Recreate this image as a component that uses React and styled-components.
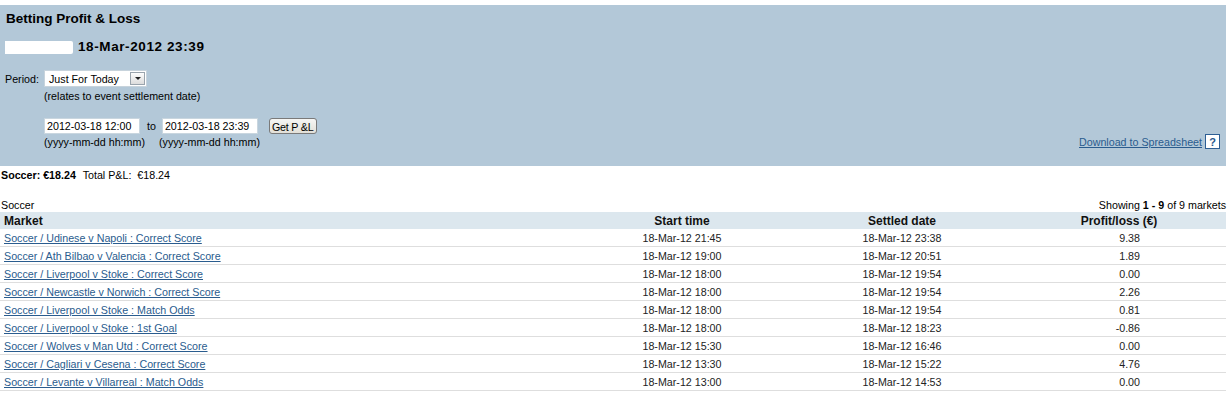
import styled, { createGlobalStyle } from "styled-components"

const Global = createGlobalStyle`
  body {
    margin: 0;
    background: #ffffff;
    font-family: "Liberation Sans", Arial, sans-serif;
    font-size: 10.7px;
    color: #000;
  }
`

const Page = styled.div`
  width: 1228px;
  padding-top: 5px;
`

const Panel = styled.section`
  width: 1226px;
  height: 161px;
  box-sizing: border-box;
  background: #b3c8d8;
  display: flex;
  justify-content: space-between;
  align-items: flex-end;
  padding: 6px 6px 17px 5px;
`

const Left = styled.div`
  display: flex;
  flex-direction: column;
  align-self: stretch;
`

const Title = styled.h1`
  margin: 0 0 0 1px;
  font-size: 13.5px;
  line-height: 15px;
  font-weight: bold;
`

const DateLine = styled.div`
  margin-top: 13px;
  display: flex;
  align-items: center;
  gap: 5px;
  font-size: 13.5px;
  font-weight: bold;
  letter-spacing: 0.6px;
  line-height: 16px;
`

const Blank = styled.span`
  display: inline-block;
  width: 68px;
  height: 13px;
  background: #ffffff;
  border-radius: 0 2px 2px 0;
`

const FieldRow = styled.div`
  display: flex;
  align-items: center;
  margin-top: ${p => p.$top || 0}px;
  padding-left: ${p => p.$indent || 0}px;
  line-height: 16px;
`

const Label = styled.span`
  width: 39px;
`

const Select = styled.div`
  display: flex;
  align-items: center;
  justify-content: space-between;
  width: 103px;
  height: 17px;
  box-sizing: border-box;
  background: #fff;
  border: 1px solid #c7d3dc;
  padding: 0 1px 0 4px;
`

const Arrow = styled.span`
  width: 15px;
  height: 13px;
  box-sizing: border-box;
  border: 1px solid #9aa4ad;
  background: linear-gradient(#fdfdfd, #dcdcdc);
  display: flex;
  align-items: center;
  justify-content: center;
  &::after {
    content: "";
    border-left: 3px solid transparent;
    border-right: 3px solid transparent;
    border-top: 3px solid #222;
  }
`

const Note = styled.div`
  padding-left: 39px;
  line-height: 16px;
  margin-top: 1px;
`

const DateInput = styled.input`
  width: 96px;
  height: 16px;
  box-sizing: border-box;
  border: 1px solid #c9d6df;
  padding: 0 2px;
  font: inherit;
  color: #000;
  background: #fff;
`

const To = styled.span`
  margin: 0 6px 0 7px;
`

const Button = styled.button`
  margin-left: 11px;
  height: 16px;
  box-sizing: border-box;
  padding: 0 2px;
  font: inherit;
  letter-spacing: -0.2px;
  background: linear-gradient(#f6f6f4, #e2e0d8);
  border: 1px solid #7a7a7a;
  border-radius: 3px;
  color: #000;
`

const Hint = styled.span`
  width: ${p => p.$w}px;
`

const Download = styled.div`
  display: flex;
  align-items: center;
  gap: 3px;
`

const Link = styled.a`
  color: #2a5c8e;
  text-decoration: underline;
  cursor: pointer;
`

const Help = styled.span`
  width: 15px;
  height: 15px;
  box-sizing: border-box;
  border: 1px solid #2d5f94;
  background: #fff;
  color: #27578d;
  font-weight: bold;
  font-size: 11px;
  display: flex;
  align-items: center;
  justify-content: center;
`

const Summary = styled.div`
  line-height: 16px;
  margin: 1px 0 0 1px;
  b { margin-right: 4px; }
`

const Caption = styled.div`
  display: flex;
  justify-content: space-between;
  width: 1226px;
  margin-top: 14px;
  padding-left: 1px;
  box-sizing: border-box;
  line-height: 16px;
`

const Table = styled.table`
  width: 1226px;
  border-collapse: collapse;
  table-layout: fixed;
  margin-top: -1px;
`

const Th = styled.th`
  background: #dce7ee;
  height: 17px;
  padding: 0 4px;
  font-size: 12px;
  font-weight: bold;
  text-align: ${p => p.$align || "center"};
  color: #111;
`

const Td = styled.td`
  height: 17px;
  padding: 0 ${p => p.$pr || 4}px 0 4px;
  border-bottom: 1px solid #dedede;
  text-align: ${p => p.$align || "center"};
  color: #222;
`

const rows = [
  ["Soccer / Udinese v Napoli : Correct Score", "18-Mar-12 21:45", "18-Mar-12 23:38", "9.38"],
  ["Soccer / Ath Bilbao v Valencia : Correct Score", "18-Mar-12 19:00", "18-Mar-12 20:51", "1.89"],
  ["Soccer / Liverpool v Stoke : Correct Score", "18-Mar-12 18:00", "18-Mar-12 19:54", "0.00"],
  ["Soccer / Newcastle v Norwich : Correct Score", "18-Mar-12 18:00", "18-Mar-12 19:54", "2.26"],
  ["Soccer / Liverpool v Stoke : Match Odds", "18-Mar-12 18:00", "18-Mar-12 19:54", "0.81"],
  ["Soccer / Liverpool v Stoke : 1st Goal", "18-Mar-12 18:00", "18-Mar-12 18:23", "-0.86"],
  ["Soccer / Wolves v Man Utd : Correct Score", "18-Mar-12 15:30", "18-Mar-12 16:46", "0.00"],
  ["Soccer / Cagliari v Cesena : Correct Score", "18-Mar-12 13:30", "18-Mar-12 15:22", "4.76"],
  ["Soccer / Levante v Villarreal : Match Odds", "18-Mar-12 13:00", "18-Mar-12 14:53", "0.00"],
]

export default function App() {
  return (
    <Page>
      <Global />
      <Panel>
        <Left>
          <Title>Betting Profit &amp; Loss</Title>
          <DateLine>
            <Blank />
            18-Mar-2012 23:39
          </DateLine>
          <FieldRow $top={15}>
            <Label>Period:</Label>
            <Select>
              Just For Today
              <Arrow />
            </Select>
          </FieldRow>
          <Note>(relates to event settlement date)</Note>
          <FieldRow $top={14} $indent={39}>
            <DateInput readOnly value="2012-03-18 12:00" />
            <To>to</To>
            <DateInput readOnly value="2012-03-18 23:39" />
            <Button>Get P &amp;L</Button>
          </FieldRow>
          <FieldRow $indent={39}>
            <Hint $w={115}>(yyyy-mm-dd hh:mm)</Hint>
            <Hint $w={120}>(yyyy-mm-dd hh:mm)</Hint>
          </FieldRow>
        </Left>
        <Download>
          <Link>Download to Spreadsheet</Link>
          <Help>?</Help>
        </Download>
      </Panel>

      <Summary>
        <b>Soccer: €18.24</b> Total P&amp;L:&nbsp; €18.24
      </Summary>

      <Caption>
        <span>Soccer</span>
        <span>Showing <b>1 - 9</b> of 9 markets</span>
      </Caption>

      <Table>
        <colgroup>
          <col style={{ width: 572 }} />
          <col style={{ width: 220 }} />
          <col style={{ width: 220 }} />
          <col />
        </colgroup>
        <thead>
          <tr>
            <Th $align="left">Market</Th>
            <Th>Start time</Th>
            <Th>Settled date</Th>
            <Th>Profit/loss (€)</Th>
          </tr>
        </thead>
        <tbody>
          {rows.map(r => (
            <tr key={r[0]}>
              <Td $align="left"><Link>{r[0]}</Link></Td>
              <Td>{r[1]}</Td>
              <Td>{r[2]}</Td>
              <Td $align="right" $pr={86}>{r[3]}</Td>
            </tr>
          ))}
        </tbody>
      </Table>
    </Page>
  )
}
